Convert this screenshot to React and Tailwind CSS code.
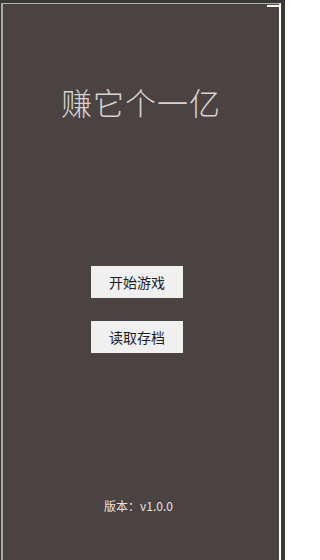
export default function App() {
  return (
    <div className="h-[560px] w-[285px] overflow-hidden bg-[#3a3737] pl-[1px] pt-[3px] pr-[4px] font-['Noto_Sans_CJK_SC',sans-serif]">
      <div className="relative flex h-full flex-col items-center border-t border-l-2 border-r-2 border-t-[#b3b1b1] border-l-[#a9a7a7] border-r-white bg-[#4a4342]">
        {/* corner bracket */}
        <div className="absolute top-[1px] right-0 h-[2px] w-[12px] bg-white" />

        <h1 className="mt-[78px] text-[31px] font-light leading-[40px] tracking-[1px] text-[#d6d3d3]">
          赚它个一亿
        </h1>

        <button className="mt-[144px] mr-[8px] flex h-[32px] w-[92px] items-center justify-center bg-[#f0f0f0] text-[14px] text-[#1e1e1e]">
          开始游戏
        </button>
        <button className="mt-[23px] mr-[8px] flex h-[32px] w-[92px] items-center justify-center bg-[#f0f0f0] text-[14px] text-[#1e1e1e]">
          读取存档
        </button>

        <p className="mt-[145px] mr-[5px] text-[12px] leading-[16px] text-[#e6e4e4]">
          版本：v1.0.0
        </p>
      </div>
    </div>
  );
}
